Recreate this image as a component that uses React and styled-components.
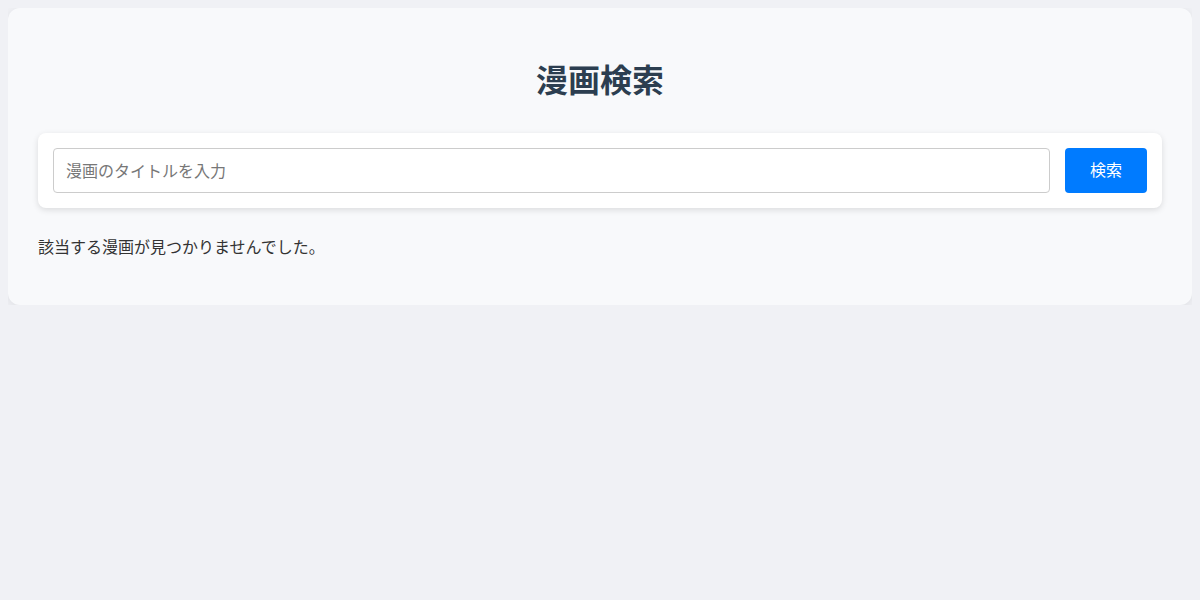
import React from "react";
import styled, { createGlobalStyle } from "styled-components";

const Global = createGlobalStyle`
  body {
    margin: 8px;
    background: #f0f1f5;
    font-family: "Noto Sans CJK JP", "Noto Sans", sans-serif;
  }
  * { box-sizing: border-box; }
`;

const Container = styled.div`
  background: #f8f9fb;
  border-radius: 12px;
  padding: 30px 30px 30px;
  box-shadow: 0 2px 10px rgba(0, 0, 0, 0.08);
`;

const Title = styled.h1`
  margin: 18px 0 33px;
  font-size: 32px;
  line-height: 44px;
  font-weight: 700;
  text-align: center;
  color: #2c3e50;
`;

const Form = styled.form`
  display: flex;
  gap: 15px;
  padding: 15px;
  background: #ffffff;
  border-radius: 8px;
  box-shadow: 0 2px 6px rgba(0, 0, 0, 0.12);
`;

const Input = styled.input`
  flex: 1;
  height: 45px;
  padding: 0 12px 2px;
  border: 1px solid #cccccc;
  border-radius: 4px;
  font-family: inherit;
  font-size: 16px;
  color: #333;
  outline: none;
  &::placeholder {
    color: #777777;
  }
`;

const Button = styled.button`
  height: 45px;
  padding: 0 25px 3px;
  border: none;
  border-radius: 4px;
  background: #007bff;
  color: #ffffff;
  font-family: inherit;
  font-size: 16px;
  cursor: pointer;
`;

const Message = styled.p`
  margin: 26px 0 17px;
  font-size: 16px;
  line-height: 24px;
  color: #333333;
`;

export default function App() {
  return (
    <>
      <Global />
      <Container>
        <Title>漫画検索</Title>
        <Form onSubmit={(e) => e.preventDefault()}>
          <Input type="text" placeholder="漫画のタイトルを入力" />
          <Button type="submit">検索</Button>
        </Form>
        <Message>該当する漫画が見つかりませんでした。</Message>
      </Container>
    </>
  );
}
